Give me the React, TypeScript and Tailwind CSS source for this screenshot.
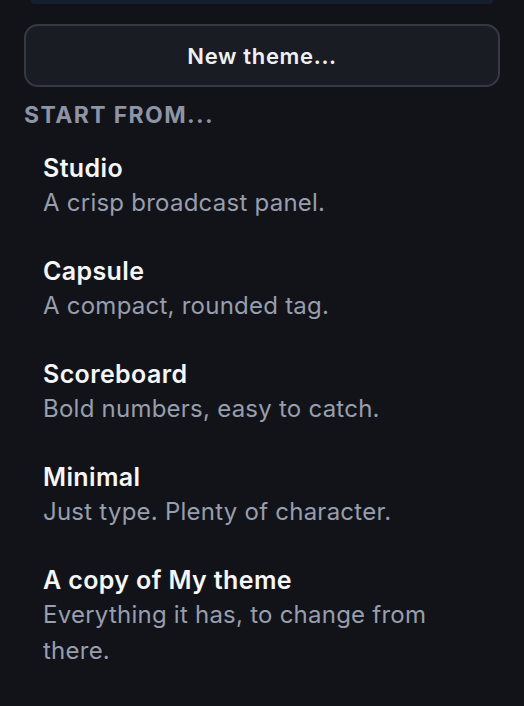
import React from "react";

const items = [
  { title: "Studio", desc: "A crisp broadcast panel." },
  { title: "Capsule", desc: "A compact, rounded tag." },
  { title: "Scoreboard", desc: "Bold numbers, easy to catch." },
  { title: "Minimal", desc: "Just type. Plenty of character." },
  { title: "A copy of My theme", desc: "Everything it has, to change from there." },
];

export default function App() {
  return (
    <div
      className="min-h-[706px] w-full bg-[#121318] px-6"
      style={{ fontFamily: "Inter, 'Noto Sans', sans-serif" }}
    >
      <div className="mx-[7px] h-[4px] rounded-b-[5px] bg-[#161e31]" />
      <button className="mt-5 flex h-[63px] w-full items-center justify-center rounded-[14px] border-2 border-[#363944] bg-[#1a1c24] pt-px text-[22px] font-semibold tracking-[0.03em] text-[#eef0f5]">
        New theme...
      </button>
      <div className="mt-[14px] text-[23px] font-bold uppercase leading-[28px] tracking-[0.06em] text-[#8d94a6]">
        Start from...
      </div>
      <div className="mt-[6px] flex flex-col">
        {items.map((it) => (
          <div key={it.title} className="px-[19px] pt-4 pb-[17px]">
            <div className="text-[25px] font-semibold leading-[34px] tracking-[0.015em] text-[#f5f6f8]">
              {it.title}
            </div>
            <div className="text-[24px] leading-[36px] tracking-[0.01em] text-[#979eae]">
              {it.desc}
            </div>
          </div>
        ))}
      </div>
    </div>
  );
}
